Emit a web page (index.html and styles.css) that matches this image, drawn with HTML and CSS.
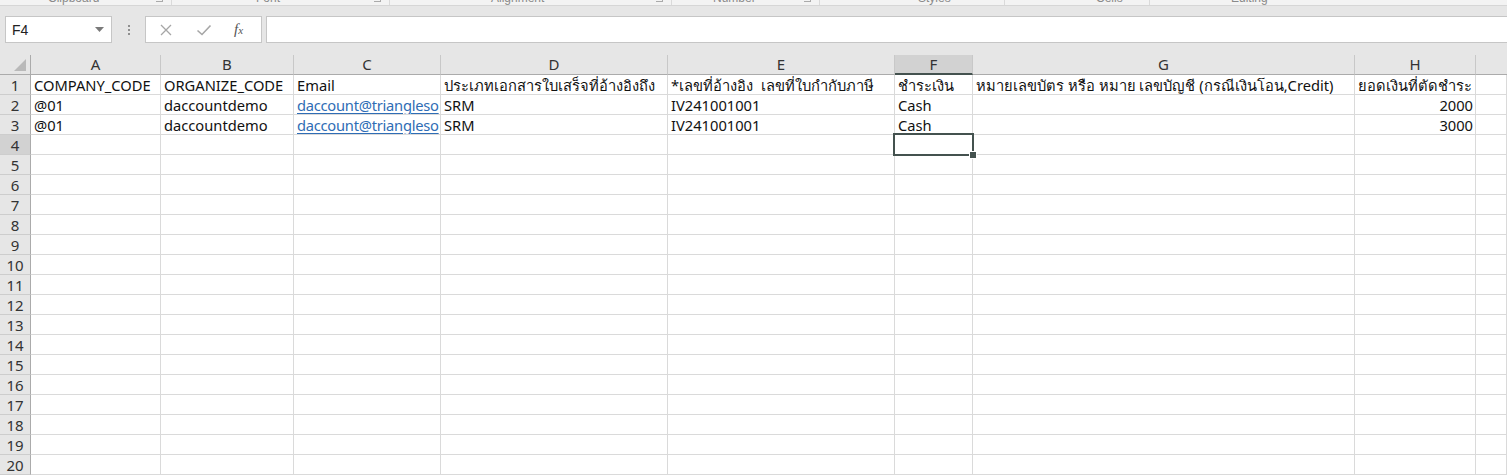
FILE: index.html
```html
<!DOCTYPE html>
<html lang="th">
<head>
<meta charset="utf-8">
<title>Excel</title>
<link rel="stylesheet" href="styles.css">
</head>
<body>
<div class="ribbon">
  <div class="ribbon-groups">
    <div class="rg rg-clip"><span class="rl">Clipboard</span><span class="launch"></span></div>
    <div class="rg rg-font"><span class="rl">Font</span><span class="launch"></span></div>
    <div class="rg rg-align"><span class="rl">Alignment</span><span class="launch"></span></div>
    <div class="rg rg-num"><span class="rl">Number</span><span class="launch"></span></div>
    <div class="rg rg-styles"><span class="rl">Styles</span></div>
    <div class="rg rg-cells"><span class="rl">Cells</span></div>
    <div class="rg rg-edit"><span class="rl">Editing</span></div>
  </div>
</div>
<div class="fbar">
  <div class="namebox"><span class="nb-text">F4</span>
    <svg class="nb-arrow" width="9" height="5" viewBox="0 0 9 5"><polygon points="0,0 9,0 4.5,5" fill="#7a7a7a"/></svg>
  </div>
  <div class="grip"><span></span><span></span><span></span></div>
  <div class="fbtns">
    <svg class="ic-x" width="14" height="14" viewBox="0 0 14 14"><path d="M2 2 L12 12 M12 2 L2 12" stroke="#a6a6a6" stroke-width="1.3" fill="none"/></svg>
    <svg class="ic-ok" width="16" height="14" viewBox="0 0 16 14"><path d="M1.5 7.5 L6 11.5 L14.5 2.5" stroke="#a6a6a6" stroke-width="1.6" fill="none"/></svg>
    <span class="fx">f<span class="fx-x">x</span></span>
  </div>
  <div class="finput"></div>
</div>
<div class="sheet">
  <div class="ch corner"><svg width="12" height="12" viewBox="0 0 12 12"><polygon points="12,0 12,12 0,12" fill="#b9b9b9"/></svg></div>
  <div class="ch">A</div><div class="ch">B</div><div class="ch">C</div><div class="ch">D</div><div class="ch">E</div><div class="ch sel">F</div><div class="ch">G</div><div class="ch">H</div><div class="ch last"></div>

  <div class="rh">1</div><div class="c">COMPANY_CODE</div><div class="c">ORGANIZE_CODE</div><div class="c">Email</div><div class="c">ประเภทเอกสารใบเสร็จที่อ้างอิงถึง</div><div class="c">*เลขที่อ้างอิง&nbsp; เลขที่ใบกำกับภาษี</div><div class="c">ชำระเงิน</div><div class="c">หมายเลขบัตร หรือ หมาย เลขบัญชี (กรณีเงินโอน,Credit)</div><div class="c">ยอดเงินที่ตัดชำระ</div><div class="c"></div>

  <div class="rh">2</div><div class="c">@01</div><div class="c">daccountdemo</div><div class="c"><span class="link">daccount@triangleso</span></div><div class="c">SRM</div><div class="c">IV241001001</div><div class="c">Cash</div><div class="c"></div><div class="c num">2000</div><div class="c"></div>

  <div class="rh">3</div><div class="c">@01</div><div class="c">daccountdemo</div><div class="c"><span class="link">daccount@triangleso</span></div><div class="c">SRM</div><div class="c">IV241001001</div><div class="c">Cash</div><div class="c"></div><div class="c num">3000</div><div class="c"></div>

  <div class="rh sel">4</div><div class="c"></div><div class="c"></div><div class="c"></div><div class="c"></div><div class="c"></div><div class="c active"><span class="handle"></span></div><div class="c"></div><div class="c"></div><div class="c"></div>

  <div class="rh">5</div><div class="c"></div><div class="c"></div><div class="c"></div><div class="c"></div><div class="c"></div><div class="c"></div><div class="c"></div><div class="c"></div><div class="c"></div>
  <div class="rh">6</div><div class="c"></div><div class="c"></div><div class="c"></div><div class="c"></div><div class="c"></div><div class="c"></div><div class="c"></div><div class="c"></div><div class="c"></div>
  <div class="rh">7</div><div class="c"></div><div class="c"></div><div class="c"></div><div class="c"></div><div class="c"></div><div class="c"></div><div class="c"></div><div class="c"></div><div class="c"></div>
  <div class="rh">8</div><div class="c"></div><div class="c"></div><div class="c"></div><div class="c"></div><div class="c"></div><div class="c"></div><div class="c"></div><div class="c"></div><div class="c"></div>
  <div class="rh">9</div><div class="c"></div><div class="c"></div><div class="c"></div><div class="c"></div><div class="c"></div><div class="c"></div><div class="c"></div><div class="c"></div><div class="c"></div>
  <div class="rh">10</div><div class="c"></div><div class="c"></div><div class="c"></div><div class="c"></div><div class="c"></div><div class="c"></div><div class="c"></div><div class="c"></div><div class="c"></div>
  <div class="rh">11</div><div class="c"></div><div class="c"></div><div class="c"></div><div class="c"></div><div class="c"></div><div class="c"></div><div class="c"></div><div class="c"></div><div class="c"></div>
  <div class="rh">12</div><div class="c"></div><div class="c"></div><div class="c"></div><div class="c"></div><div class="c"></div><div class="c"></div><div class="c"></div><div class="c"></div><div class="c"></div>
  <div class="rh">13</div><div class="c"></div><div class="c"></div><div class="c"></div><div class="c"></div><div class="c"></div><div class="c"></div><div class="c"></div><div class="c"></div><div class="c"></div>
  <div class="rh">14</div><div class="c"></div><div class="c"></div><div class="c"></div><div class="c"></div><div class="c"></div><div class="c"></div><div class="c"></div><div class="c"></div><div class="c"></div>
  <div class="rh">15</div><div class="c"></div><div class="c"></div><div class="c"></div><div class="c"></div><div class="c"></div><div class="c"></div><div class="c"></div><div class="c"></div><div class="c"></div>
  <div class="rh">16</div><div class="c"></div><div class="c"></div><div class="c"></div><div class="c"></div><div class="c"></div><div class="c"></div><div class="c"></div><div class="c"></div><div class="c"></div>
  <div class="rh">17</div><div class="c"></div><div class="c"></div><div class="c"></div><div class="c"></div><div class="c"></div><div class="c"></div><div class="c"></div><div class="c"></div><div class="c"></div>
  <div class="rh">18</div><div class="c"></div><div class="c"></div><div class="c"></div><div class="c"></div><div class="c"></div><div class="c"></div><div class="c"></div><div class="c"></div><div class="c"></div>
  <div class="rh">19</div><div class="c"></div><div class="c"></div><div class="c"></div><div class="c"></div><div class="c"></div><div class="c"></div><div class="c"></div><div class="c"></div><div class="c"></div>
  <div class="rh">20</div><div class="c"></div><div class="c"></div><div class="c"></div><div class="c"></div><div class="c"></div><div class="c"></div><div class="c"></div><div class="c"></div><div class="c"></div>
</div>
</body>
</html>
```
FILE: styles.css
```css
* { box-sizing: border-box; }
html, body { margin: 0; padding: 0; }
body {
  width: 1507px;
  height: 475px;
  overflow: hidden;
  background: #ffffff;
  font-family: "Noto Sans", "DejaVu Sans", sans-serif;
}

/* ribbon strip (only bottom of labels visible) */
.ribbon {
  height: 6px;
  overflow: hidden;
  background: #f3f3f3;
  border-bottom: 1px solid #d6d6d6;
}
.ribbon-groups {
  display: flex;
  margin-top: -10px;
  height: 16px;
}
.rg {
  display: flex;
  align-items: center;
  justify-content: flex-start;
  border-right: 1px solid #dadada;
  font-size: 12px;
  color: #8a8a8a;
  font-family: "Liberation Sans", sans-serif;
}
.rl { line-height: 16px; }
.launch {
  width: 7px; height: 7px;
  border-right: 1px solid #aaa;
  border-bottom: 1px solid #aaa;
  margin-left: auto;
  margin-right: 8px;
}
.rg-clip { width: 172px; }
.rg-clip .rl { margin-left: 48px; }
.rg-font { width: 218px; }
.rg-font .rl { margin-left: 84px; }
.rg-align { width: 282px; }
.rg-align .rl { margin-left: 101px; }
.rg-num { width: 148px; }
.rg-num .rl { margin-left: 41px; }
.rg-styles { width: 185px; }
.rg-styles .rl { margin-left: 98px; }
.rg-cells { width: 145px; }
.rg-cells .rl { margin-left: 91px; }
.rg-edit { width: 200px; border-right: none; }
.rg-edit .rl { margin-left: 81px; }

/* formula bar */
.fbar {
  height: 49px;
  background: #e6e6e6;
  display: flex;
  align-items: flex-start;
  padding: 10px 0 0 5px;
}
.namebox {
  width: 107px;
  height: 27px;
  background: #fff;
  border: 1px solid #c6c6c6;
  display: flex;
  align-items: center;
  padding: 0 6px 0 6px;
}
.nb-text {
  font-family: "Liberation Sans", sans-serif;
  font-size: 14px;
  color: #222;
}
.nb-arrow { margin-left: auto; margin-right: 1px; }
.grip {
  width: 33px;
  height: 27px;
  display: flex;
  flex-direction: column;
  align-items: center;
  justify-content: center;
  gap: 2px;
}
.grip span {
  width: 2px; height: 2px;
  background: #8f8f8f;
}
.fbtns {
  width: 117px;
  height: 27px;
  background: #fff;
  border: 1px solid #c6c6c6;
  display: flex;
  align-items: center;
  padding-left: 13px;
}
.ic-x { margin-right: 23px; }
.ic-ok { margin-right: 22px; }
.fx {
  font-family: "Liberation Serif", serif;
  font-style: italic;
  font-size: 15px;
  color: #555;
  line-height: 1;
}
.fx-x { font-size: 11px; }
.finput {
  flex: 1;
  margin-left: 4px;
  height: 27px;
  background: #fff;
  border: 1px solid #c6c6c6;
  border-right: none;
}

/* sheet */
.sheet {
  display: grid;
  grid-template-columns: 31px 130px 133px 147px 227px 227px 78px 382px 121px 1fr;
  grid-auto-rows: 20px;
}
.ch {
  background: #e6e6e6;
  border-right: 1px solid #c8c8c8;
  border-bottom: 1px solid #ababab;
  text-align: center;
  font-family: "Noto Sans", "Liberation Sans", sans-serif;
  font-size: 15px;
  line-height: 19px;
  color: #333;
}
.ch.corner {
  display: flex;
  align-items: flex-end;
  justify-content: flex-end;
  padding: 0 4px 3px 0;
  border-right: 1px solid #ababab;
}
.ch.sel {
  background: #d2d2d2;
  border-bottom: 2px solid #44524f;
  line-height: 18px;
}
.ch.last { border-right: none; }
.rh {
  background: #e6e6e6;
  border-right: 1px solid #ababab;
  border-bottom: 1px solid #cdcdcd;
  text-align: center;
  font-family: "Noto Sans", "Liberation Sans", sans-serif;
  font-size: 15px;
  line-height: 20px;
  color: #333;
}
.rh.sel { background: #d2d2d2; }
.c {
  border-right: 1px solid #dadada;
  border-bottom: 1px solid #dadada;
  padding: 1px 2px 0 3px;
  font-size: 14.7px;
  line-height: 19px;
  color: #111;
  white-space: nowrap;
  overflow: hidden;
}
.link {
  color: #2f6db5;
  text-decoration: underline;
  text-decoration-thickness: 1px;
  text-underline-offset: 2px;
  letter-spacing: -0.25px;
}
.c.num { text-align: right; }
.c.active {
  position: relative;
  overflow: visible;
}
.c.active::after {
  content: "";
  position: absolute;
  left: -2px; top: -2px; right: -2px; bottom: -2px;
  border: 2px solid #44524f;
}
.handle {
  position: absolute;
  right: -4px;
  bottom: -4px;
  width: 6px;
  height: 6px;
  background: #44524f;
  outline: 1px solid #fff;
  z-index: 2;
}
```
